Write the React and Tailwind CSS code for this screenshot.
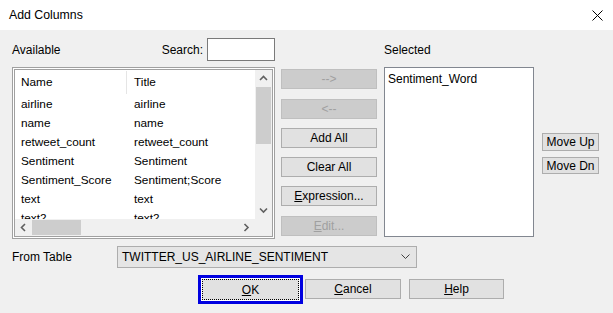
import React from "react";

const font = { fontFamily: '"Liberation Sans", Arial, sans-serif' };

function Btn({ children, disabled, className = "" }) {
  return (
    <div
      className={
        "flex items-center justify-center border text-[12px] " +
        (disabled
          ? "bg-[#cccccc] border-[#bfbfbf] text-[#a0a0a0] "
          : "bg-[#e1e1e1] border-[#adadad] text-black ") +
        className
      }
    >
      {children}
    </div>
  );
}

function Chev({ dir, className = "" }) {
  const paths = {
    up: "M1 5 L4.5 1.5 L8 5",
    down: "M1 1.5 L4.5 5 L8 1.5",
    left: "M5 1 L1.5 4.5 L5 8",
    right: "M1.5 1 L5 4.5 L1.5 8",
  };
  const vert = dir === "up" || dir === "down";
  return (
    <svg
      width={vert ? 9 : 7}
      height={vert ? 7 : 9}
      viewBox={vert ? "0 0 9 7" : "0 0 7 9"}
      className={className}
    >
      <path d={paths[dir]} fill="none" stroke="#606060" strokeWidth="1.6" />
    </svg>
  );
}

const rows = [
  ["airline", "airline"],
  ["name", "name"],
  ["retweet_count", "retweet_count"],
  ["Sentiment", "Sentiment"],
  ["Sentiment_Score", "Sentiment;Score"],
  ["text", "text"],
  ["text2", "text2"],
];

export default function App() {
  return (
    <div className="w-[613px] h-[313px] bg-[#f0f0f0] text-[12px] text-black overflow-hidden" style={font}>
      {/* Title bar */}
      <div className="h-[30px] bg-white flex items-center justify-between pl-[9px] pr-[10px]">
        <span className="text-[12.3px]">Add Columns</span>
        <svg width="11" height="11" viewBox="0 0 11 11">
          <path d="M0.5 0.5 L10.5 10.5 M10.5 0.5 L0.5 10.5" stroke="#000" strokeWidth="1" />
        </svg>
      </div>

      <div className="pl-[12px]">
        {/* Labels row */}
        <div className="mt-[8px] h-[23px] flex items-center">
          <div className="w-[263px] flex items-center">
            <span>Available</span>
            <span className="ml-auto mr-[4px]">Search:</span>
            <div className="w-[68px] h-[23px] bg-white border border-[#7a7a7a]" />
          </div>
          <span className="ml-[109px]">Selected</span>
        </div>

        {/* Main row */}
        <div className="mt-[6px] flex items-start">
          {/* Available list */}
          <div className="w-[263px] h-[172px] border border-[#a0a0a0] bg-white p-px">
            <div className="w-full h-full border border-[#a0a0a0] flex flex-col">
              <div className="flex-1 flex min-h-0">
                <div className="flex-1 overflow-hidden text-[11.8px]">
                  <div className="h-[25px] flex items-center relative pt-[1px]">
                    <span className="w-[113px] pl-[6px]">Name</span>
                    <span className="pl-[6px]">Title</span>
                    <div className="absolute left-[111px] top-px h-[23px] w-px bg-[#e5e5e5]" />
                  </div>
                  {rows.map(([a, b]) => (
                    <div key={a} className="h-[19px] flex items-center">
                      <span className="w-[113px] pl-[6px]">{a}</span>
                      <span className="pl-[6px]">{b}</span>
                    </div>
                  ))}
                </div>
                {/* vertical scrollbar */}
                <div className="w-[17px] bg-[#f0f0f0] flex flex-col items-center">
                  <div className="h-[17px] flex items-center justify-center">
                    <Chev dir="up" />
                  </div>
                  <div className="w-[15px] h-[57px] bg-[#cdcdcd]" />
                  <div className="mt-auto h-[17px] flex items-center justify-center">
                    <Chev dir="down" />
                  </div>
                </div>
              </div>
              {/* horizontal scrollbar */}
              <div className="h-[17px] flex">
                <div className="flex-1 bg-[#f0f0f0] flex items-center">
                  <div className="w-[17px] flex justify-center">
                    <Chev dir="left" />
                  </div>
                  <div className="w-[49px] h-[15px] bg-[#cdcdcd]" />
                  <div className="ml-auto w-[17px] flex justify-center">
                    <Chev dir="right" />
                  </div>
                </div>
                <div className="w-[17px] bg-[#f0f0f0]" />
              </div>
            </div>
          </div>

          {/* Middle buttons */}
          <div className="ml-[6px] w-[96px] flex flex-col">
            <Btn disabled className="mt-[2px] h-[20px]">--&gt;</Btn>
            <Btn disabled className="mt-[10px] h-[20px]">&lt;--</Btn>
            <Btn className="mt-[9px] h-[20px]">Add All</Btn>
            <Btn className="mt-[9px] h-[20px]">Clear All</Btn>
            <Btn className="mt-[9px] h-[20px]">
              <span><span className="underline">E</span>xpression...</span>
            </Btn>
            <Btn disabled className="mt-[10px] h-[20px]">
              <span><span className="underline">E</span>dit...</span>
            </Btn>
          </div>

          {/* Selected list */}
          <div className="ml-[7px] w-[150px] h-[170px] bg-white border border-[#828790] pl-[3px] pt-[2px]">
            Sentiment_Word
          </div>

          {/* Move buttons */}
          <div className="ml-[8px] w-[57px] flex flex-col">
            <Btn className="mt-[66px] h-[18px]">Move Up</Btn>
            <Btn className="mt-[6px] h-[17px]">Move Dn</Btn>
          </div>
        </div>

        {/* From Table */}
        <div className="mt-[7px] flex items-center">
          <span className="w-[105px]">From Table</span>
          <div className="w-[300px] h-[22px] bg-[#e5e5e5] border border-[#adadad] flex items-center pl-[4px] pr-[6px]">
            <span>TWITTER_US_AIRLINE_SENTIMENT</span>
            <svg className="ml-auto" width="9" height="6" viewBox="0 0 9 6">
              <path d="M0.5 0.5 L4.5 4.5 L8.5 0.5" fill="none" stroke="#404040" strokeWidth="1" />
            </svg>
          </div>
        </div>

        {/* Bottom buttons */}
        <div className="mt-[7px] flex items-start pl-[186px]">
          <div className="w-[105px] h-[29px] border-[3px] border-[#0000e0] p-px bg-white">
            <div className="w-full h-full bg-[#e1e1e1] border border-dotted border-black flex items-center justify-center">
              <span><span className="underline">O</span>K</span>
            </div>
          </div>
          <Btn className="ml-[2px] mt-[4px] w-[96px] h-[20px]">
            <span><span className="underline">C</span>ancel</span>
          </Btn>
          <Btn className="ml-[8px] mt-[4px] w-[95px] h-[20px]">
            <span><span className="underline">H</span>elp</span>
          </Btn>
        </div>
      </div>
    </div>
  );
}
